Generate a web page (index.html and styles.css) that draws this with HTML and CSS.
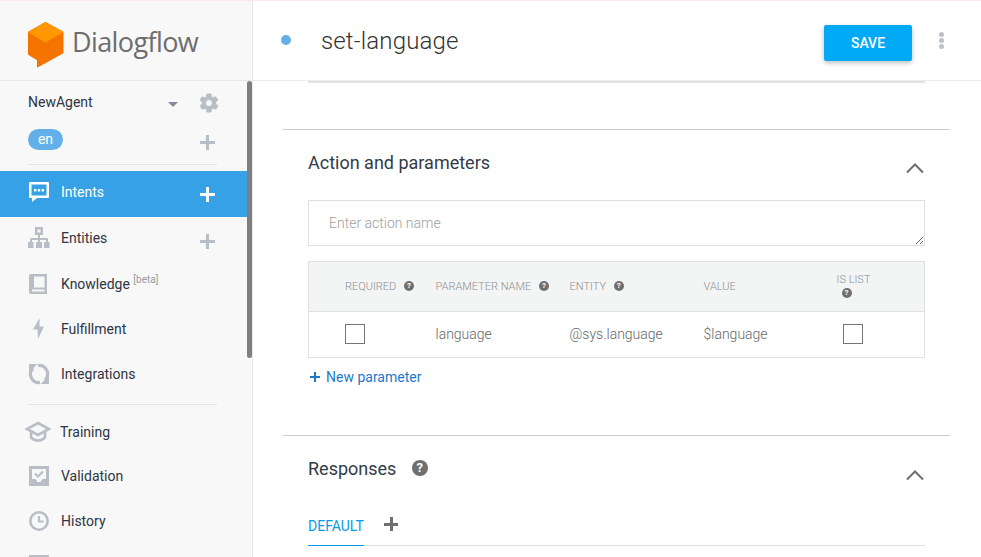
FILE: index.html
```html
<!DOCTYPE html>
<html>
  <head>
    <title>Dialogflow - set-language</title>
    <meta charset="UTF-8" />
    <link rel="stylesheet" href="styles.css">
  </head>
  <body>
    <div class="app">
      <aside class="sidebar">
        <div class="logo">
          <svg class="logo-mark" width="36" height="46" viewBox="0 0 36 46">
            <path fill="#f57400" stroke="#f57400" stroke-linejoin="round" d="M17.500 .5 L35 10 V31 L9.500 45 V38 L.5 32.500 V10 Z"/>
            <path fill="#ff9800" stroke="#ff9800" stroke-linejoin="round" d="M17.500 .5 L35 10 L17.500 20 L.5 10 Z"/>
          </svg>
          <span class="logo-text">Dialogflow</span>
        </div>
        <div class="scrollbar"></div>
        <div class="agent">
          <span class="agent-name">NewAgent</span>
          <span class="caret"></span>
          <svg class="gear" width="22" height="22" viewBox="0 0 24 24">
            <path fill="#b9bec6" stroke="#b9bec6" stroke-width="0.6" d="M19.4 13c.1-.3.1-.7.1-1s0-.7-.1-1l2.100-1.600c.2-.2.2-.4.1-.6l-2-3.500c-.1-.2-.4-.3-.6-.2l-2.500 1c-.5-.4-1.100-.7-1.700-1L14.400 2.400c0-.2-.2-.4-.5-.4h-4c-.2 0-.4.2-.5.4L9 5.100c-.6.2-1.100.6-1.700 1l-2.500-1c-.2-.1-.5 0-.6.2l-2 3.500c-.1.2-.1.5.1.6L4.500 11c0 .3-.1.7-.1 1s0 .7.1 1l-2.100 1.600c-.2.2-.2.4-.1.6l2 3.500c.1.2.4.3.6.2l2.500-1c.5.4 1.100.7 1.700 1l.4 2.700c0 .2.2.4.5.4h4c.2 0 .4-.2.5-.4l.4-2.700c.6-.2 1.100-.6 1.700-1l2.500 1c.2.1.5 0 .6-.2l2-3.500c.1-.2.1-.5-.1-.6zM12 15.500a3.500 3.500 0 1 1 0-7 3.500 3.500 0 0 1 0 7z"/>
          </svg>
        </div>
        <div class="lang">
          <span class="lang-pill">en</span>
          <span class="plus plus-grey"></span>
        </div>
        <div class="side-rule"></div>
        <nav class="nav">
          <a class="nav-item active">
            <svg width="22" height="22" viewBox="0 0 22 22"><path fill="#fff" d="M2 1h18a1 1 0 0 1 1 1v14a1 1 0 0 1-1 1H9l-5 4v-4H2a1 1 0 0 1-1-1V2a1 1 0 0 1 1-1z"/><path fill="#36a1e4" d="M3.500 3.500h15v11h-15z"/><path fill="#fff" d="M6 8h2.400v2.400H6zM9.800 8h2.400v2.400H9.800zM13.600 8H16v2.400h-2.400z"/></svg>
            <span class="nav-label">Intents</span>
            <span class="plus"></span>
          </a>
          <a class="nav-item">
            <svg width="22" height="22" viewBox="0 0 22 22"><path fill="#b9bec6" fill-rule="evenodd" d="M7 0h8v8h-3v3h7a1 1 0 0 1 1 1v3h1.500v6h-5.500v-6H18v-2h-6v2h2v6H8v-6h2v-2H4v2h1.500v6H0v-6h2v-3a1 1 0 0 1 1-1h7V8H7zM9.500 2.500v3h3v-3z"/></svg>
            <span class="nav-label">Entities</span>
            <span class="plus plus-grey"></span>
          </a>
          <a class="nav-item">
            <svg width="22" height="22" viewBox="0 0 22 22"><path fill="#b9bec6" fill-rule="evenodd" d="M3 1h16v20H3a2 2 0 0 1-2-2V3a2 2 0 0 1 2-2zM6 3.500v11h10.500v-11zM4 16.500v2h12.500v-2z"/></svg>
            <span class="nav-label">Knowledge <sup class="beta">[beta]</sup></span>
          </a>
          <a class="nav-item item-short">
            <svg width="22" height="22" viewBox="0 0 22 22"><path fill="#b9bec6" d="M11.500 0 L5 11.500 H9.500 L10 21 L16 8.500 H11.500 Z"/></svg>
            <span class="nav-label">Fulfillment</span>
          </a>
          <a class="nav-item item-short">
            <svg width="22" height="22" viewBox="0 0 22 22"><path fill="none" stroke="#b9bec6" stroke-width="3.200" d="M12 19.500A8.500 8.500 0 0 1 5 5M10 2.500A8.500 8.500 0 0 1 17 17"/><path fill="#b9bec6" d="M1 1h8.500L1 9.500zM21 21h-8.500L21 12.500z"/></svg>
            <span class="nav-label">Integrations</span>
          </a>
        </nav>
        <div class="side-rule rule-low"></div>
        <nav class="nav nav-low">
          <a class="nav-item item-training">
            <svg width="28" height="22" viewBox="0 0 28 22"><path fill="none" stroke="#b9bec6" stroke-width="2.600" d="M14 2 L25 8 L14 14 L3 8 Z M7 11v5.500c2 2 4.500 3 7 3s5-1 7-3V11"/></svg>
            <span class="nav-label">Training</span>
          </a>
          <a class="nav-item">
            <svg width="22" height="22" viewBox="0 0 22 22"><path fill="#b9bec6" fill-rule="evenodd" d="M1 1h20v20H1zM4 4v10h3.500l2 3h3l2-3H18V4z"/><path fill="none" stroke="#b9bec6" stroke-width="2.200" d="M7 8.500l3 3 5-5"/></svg>
            <span class="nav-label">Validation</span>
          </a>
          <a class="nav-item">
            <svg width="22" height="22" viewBox="0 0 22 22"><circle cx="11" cy="11" r="8.700" fill="none" stroke="#b9bec6" stroke-width="2.600"/><path fill="none" stroke="#b9bec6" stroke-width="2.200" d="M11 6v5.500h4.500"/></svg>
            <span class="nav-label">History</span>
          </a>
          <a class="nav-item">
            <svg width="22" height="22" viewBox="0 0 22 22"><path fill="#b9bec6" d="M1 1h20v20H1z"/></svg>
          </a>
        </nav>
      </aside>

      <main class="main">
        <header class="topbar">
          <span class="dot"></span>
          <h1 class="intent-name">set-language</h1>
          <button class="save">SAVE</button>
          <span class="more"><i></i><i></i><i></i></span>
        </header>
        <div class="content">
          <div class="card-end"></div>

          <section class="section">
            <div class="section-head">
              <h2>Action and parameters</h2>
              <svg class="chevron" width="20" height="12" viewBox="0 0 20 12"><path fill="none" stroke="#6f6f6f" stroke-width="2" d="M2 10.500l8-8 8 8"/></svg>
            </div>
            <textarea class="action-input" placeholder="Enter action name"></textarea>
            <table class="params">
              <thead>
                <tr>
                  <th class="col-req">REQUIRED <span class="help"></span></th>
                  <th class="col-name">PARAMETER NAME <span class="help"></span></th>
                  <th class="col-entity">ENTITY <span class="help"></span></th>
                  <th class="col-value">VALUE</th>
                  <th class="col-list">IS LIST<br><span class="help help-list"></span></th>
                </tr>
              </thead>
              <tbody>
                <tr>
                  <td class="col-req"><span class="checkbox"></span></td>
                  <td class="col-name">language</td>
                  <td class="col-entity">@sys.language</td>
                  <td class="col-value">$language</td>
                  <td class="col-list"><span class="checkbox checkbox-list"></span></td>
                </tr>
              </tbody>
            </table>
            <a class="new-param"><span class="new-plus"></span>New parameter</a>
          </section>

          <section class="section section-resp">
            <div class="section-head">
              <h2>Responses <span class="help help-big"></span></h2>
              <svg class="chevron" width="20" height="12" viewBox="0 0 20 12"><path fill="none" stroke="#6f6f6f" stroke-width="2" d="M2 10.500l8-8 8 8"/></svg>
            </div>
            <div class="tabs">
              <span class="tab">DEFAULT</span>
              <span class="plus plus-dark"></span>
            </div>
          </section>
        </div>
      </main>
    </div>
  </body>
</html>
```

FILE: styles.css
```css
* {
  box-sizing: border-box;
}
html,
body {
  margin: 0;
  height: 100%;
  overflow: hidden;
}
body {
  background: #fff;
  color: #333;
  font-family: Roboto, Arial, sans-serif;
  font-size: 14px;
}
.app {
  display: flex;
  height: 557px;
  border-top: 1px solid #fde8e8;
}
.sidebar {
  position: relative;
  width: 253px;
  flex: none;
  height: 556px;
  overflow: hidden;
  background: #f8f8f8;
  border-right: 1px solid #e8e8e8;
}
.logo {
  display: flex;
  align-items: center;
  height: 80px;
  padding-left: 28px;
  border-bottom: 1px solid #e6e6e6;
}
.logo-mark {
  flex: none;
  margin-top: 9px;
}
.logo-text {
  margin-left: 8px;
  margin-top: 1px;
  color: #6d6d6d;
  font-family: "Open Sans", Arial, sans-serif;
  font-size: 27px;
  letter-spacing: -0.6px;
}
.scrollbar {
  position: absolute;
  top: 80px;
  right: 0;
  width: 5px;
  height: 277px;
  background: #7f7f7f;
  border-radius: 3px;
}
.agent {
  display: flex;
  align-items: center;
  height: 42px;
  padding-left: 28px;
}
.agent-name {
  width: 140px;
  color: #2f3542;
}
.caret {
  width: 0;
  height: 0;
  margin-top: 4px;
  border: 5px solid transparent;
  border-top: 5px solid #858b99;
  border-bottom: 0;
}
.gear {
  margin: 2px 0 0 20px;
}
.lang {
  display: flex;
  align-items: center;
  justify-content: space-between;
  height: 36px;
  padding: 0 37px 0 28px;
}
.lang-pill {
  width: 35px;
  height: 21px;
  margin-top: -3px;
  background: #63afe9;
  color: #fff;
  border-radius: 11px;
  text-align: center;
  line-height: 20px;
}
.lang .plus {
  margin-top: 2px;
}
.side-rule {
  height: 1px;
  margin: 5px 35px 6px 28px;
  background: #e4e4e4;
}
.rule-low {
  margin: 5px 35px 6.600px 28px;
}
.nav {
  display: flex;
  flex-direction: column;
}
.nav-item {
  display: flex;
  align-items: center;
  height: 46px;
  padding: 0 37px 4px 28px;
  color: #2f3542;
}
.nav-item svg {
  flex: none;
}
.nav-item.item-short {
  height: 45px;
  padding-bottom: 5px;
}
.nav-item.active {
  margin-right: 5px;
  padding-right: 32px;
  background: #36a1e4;
  color: #fff;
}
.nav-label {
  flex: 1;
  margin-left: 11px;
}
.nav-low .nav-item {
  height: 44.500px;
}
.nav-low .item-training {
  padding-left: 24px;
}
.item-training .nav-label {
  margin-left: 8px;
}
.beta {
  color: #9a9a9a;
  font-size: 10px;
  line-height: 0;
}
.plus {
  position: relative;
  flex: none;
  width: 15px;
  height: 15px;
  margin-top: 4px;
}
.plus::before,
.plus::after {
  content: "";
  position: absolute;
  background: #fff;
}
.plus::before {
  left: 0;
  right: 0;
  top: 6px;
  height: 3px;
}
.plus::after {
  top: 0;
  bottom: 0;
  left: 6px;
  width: 3px;
}
.plus-grey {
  margin-top: 6px;
}
.plus-grey::before,
.plus-grey::after {
  background: #b9bec6;
}
.plus-dark::before,
.plus-dark::after {
  background: #6f6f6f;
}
.main {
  flex: 1;
  min-width: 0;
}
.topbar {
  display: flex;
  align-items: center;
  height: 80px;
  padding: 0 37px 0 28px;
  border-bottom: 1px solid #ebebeb;
}
.dot {
  width: 10px;
  height: 10px;
  margin-bottom: 2px;
  background: #63afe9;
  border-radius: 50%;
}
.intent-name {
  flex: 1;
  margin: 0 0 0 30px;
  color: #333;
  font-size: 24px;
  font-weight: 300;
  letter-spacing: 0.15px;
}
.save {
  width: 88px;
  height: 36px;
  margin: 5px 27px 0 0;
  padding: 0;
  background: #02a9f5;
  color: #fff;
  border: none;
  border-radius: 2px;
  box-shadow: 0 2px 5px rgba(0, 0, 0, 0.26);
  font-family: Roboto, Arial, sans-serif;
  font-size: 14px;
  font-weight: 500;
}
.more {
  display: flex;
  flex-direction: column;
  gap: 1px;
}
.more i {
  width: 5px;
  height: 5px;
  background: #bcc0c7;
  border-radius: 50%;
}
.content {
  padding: 0 31px 0 30px;
}
.card-end {
  height: 2px;
  margin: 0 25px;
  background: #e2e2e2;
}
.section {
  margin-top: 46px;
  padding: 0 25px;
  border-top: 1px solid #cfcbcb;
}
.section-head {
  display: flex;
  justify-content: space-between;
  align-items: center;
  height: 70px;
}
.section-head h2 {
  margin: 0 0 6px;
  color: #333b46;
  font-size: 18px;
  font-weight: 400;
}
.chevron {
  margin-top: 6px;
}
.action-input {
  display: block;
  width: 100%;
  height: 46px;
  padding: 14px 20px;
  border: 1px solid #e0e0e0;
  outline: none;
  font-family: Roboto, Arial, sans-serif;
  font-size: 14px;
  font-weight: 300;
}
.action-input::placeholder {
  color: #9e9e9e;
}
.params {
  width: 100%;
  margin-top: 15px;
  table-layout: fixed;
  border-collapse: collapse;
  border: 1px solid #e0e0e0;
}
.params th {
  height: 50px;
  padding: 0;
  background: #f3f4f4;
  border-bottom: 1px solid #e0e0e0;
  color: #8f8f8f;
  font-size: 11px;
  font-weight: 300;
  text-align: left;
}
.params td {
  height: 46px;
  padding: 0 0 2px;
  color: #666;
  font-size: 14px;
  font-weight: 300;
}
.params .col-req {
  width: 127px;
  padding-left: 36px;
}
.col-name,
.col-entity {
  width: 134px;
}
.col-value {
  width: 133px;
}
.checkbox {
  display: block;
  width: 20px;
  height: 20px;
  border: 1px solid #757575;
}
.checkbox-list {
  margin-left: 6px;
}
.help {
  position: relative;
  display: inline-block;
  width: 10px;
  height: 10px;
  margin-left: 5px;
  vertical-align: -1px;
  background: #6f6f6f;
  border-radius: 50%;
}
.help::after {
  content: "?";
  position: absolute;
  inset: 0;
  color: #fff;
  font-size: 8px;
  font-weight: 700;
  line-height: 10px;
  text-align: center;
}
.help-list {
  margin: 2px 0 0 5px;
}
.help-big {
  width: 16px;
  height: 16px;
  margin-left: 11px;
  vertical-align: -1px;
}
.help-big::after {
  font-size: 13px;
  line-height: 16px;
}
.new-param {
  display: block;
  margin: 11px 0 0 2px;
  color: #1e78c8;
  font-size: 14px;
}
.new-plus {
  display: inline-block;
  width: 10px;
  height: 10px;
  margin-right: 6px;
  background: linear-gradient(#1e78c8, #1e78c8) center / 100% 2px no-repeat,
    linear-gradient(#1e78c8, #1e78c8) center / 2px 100% no-repeat;
}
.section-resp {
  margin-top: 50px;
}
.section-resp .section-head {
  height: 71px;
}
.tabs {
  display: flex;
  align-items: center;
  height: 39px;
  border-bottom: 1px solid #e0e0e0;
}
.tab {
  width: 56px;
  height: 39px;
  padding-top: 11px;
  color: #039be5;
  border-bottom: 1px solid #039be5;
  font-size: 14px;
}
.tabs .plus {
  width: 14px;
  height: 14px;
  margin: 0 0 4px 20px;
}
```
